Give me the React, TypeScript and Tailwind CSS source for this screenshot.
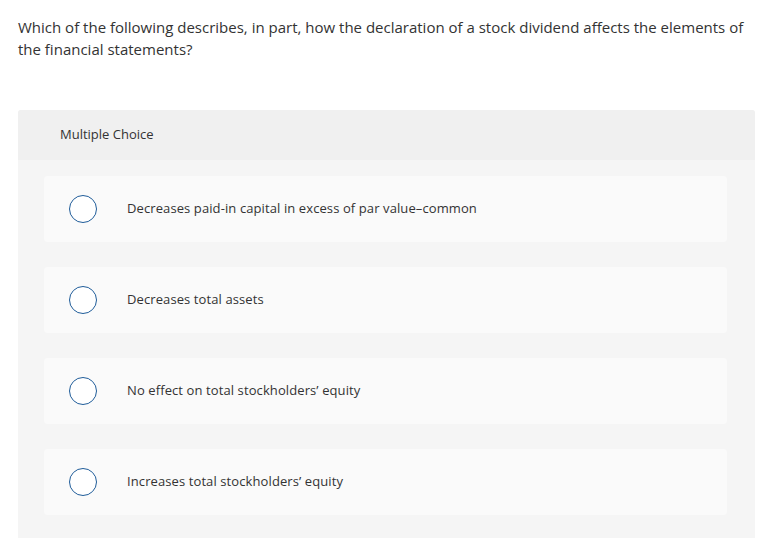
const options = [
  "Decreases paid-in capital in excess of par value\u2013common",
  "Decreases total assets",
  "No effect on total stockholders\u2019 equity",
  "Increases total stockholders\u2019 equity",
];

export default function App() {
  return (
    <div className="min-h-screen bg-white text-[#333333] font-['Open_Sans',sans-serif]">
      <div className="px-[18px] pt-[16px]">
        <p className="text-[15px] leading-[22px]">
          Which of the following describes, in part, how the declaration of a stock dividend affects the elements of
          the financial statements?
        </p>
      </div>
      <div className="mx-[18px] mr-[21px] mt-[50px] rounded-t-[3px] bg-[#f5f5f5] pb-[30px]">
        <div className="h-[50px] bg-[#f0f0f0] rounded-t-[3px] flex items-center pl-[42px] text-[13px]">
          Multiple Choice
        </div>
        <div className="flex flex-col gap-[25px] pt-[16px] pl-[26px] pr-[28px]">
          {options.map((o) => (
            <div key={o} className="h-[66px] rounded-[4px] bg-[#fafafa] flex items-center pl-[25px]">
              <span className="w-[28px] h-[28px] rounded-full border-[1.5px] border-[#1f5c99] bg-white shrink-0" />
              <span className="ml-[30px] text-[13px] tracking-[0.1px]">{o}</span>
            </div>
          ))}
        </div>
      </div>
    </div>
  );
}
